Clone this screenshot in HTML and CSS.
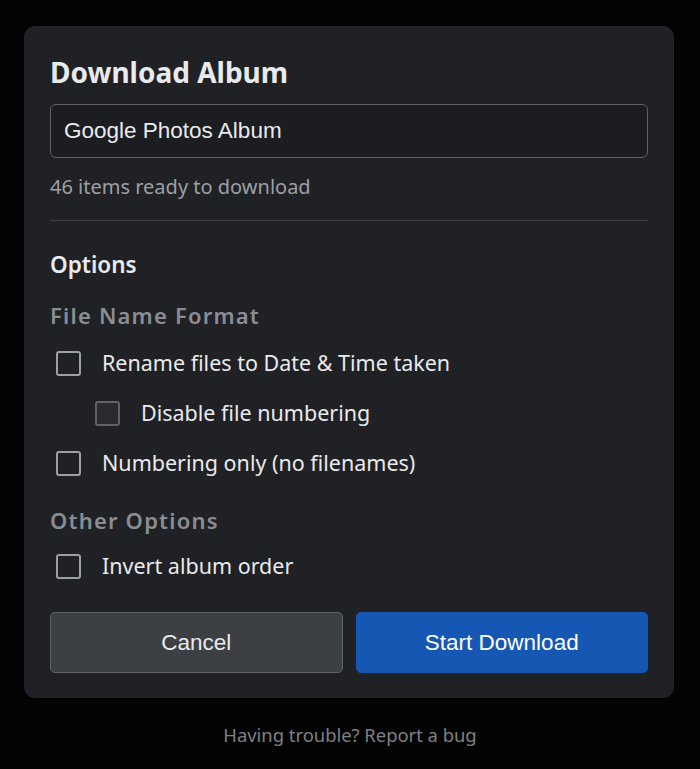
FILE: index.html
```html
<!DOCTYPE html>
<html lang="en">
<head>
<meta charset="utf-8">
<title>Download Album</title>
<link rel="stylesheet" href="styles.css">
</head>
<body>
<main class="card">
  <h1 class="title">Download Album</h1>
  <div class="name-input">Google Photos Album</div>
  <p class="count">46 items ready to download</p>
  <hr class="divider">
  <h2 class="options">Options</h2>
  <h3 class="group">File Name Format</h3>
  <label class="row"><span class="box"></span><span class="label">Rename files to Date &amp; Time taken</span></label>
  <label class="row sub"><span class="box disabled"></span><span class="label">Disable file numbering</span></label>
  <label class="row"><span class="box"></span><span class="label">Numbering only (no filenames)</span></label>
  <h3 class="group other">Other Options</h3>
  <label class="row"><span class="box"></span><span class="label">Invert album order</span></label>
  <div class="actions">
    <button class="btn cancel">Cancel</button>
    <button class="btn primary">Start Download</button>
  </div>
</main>
<p class="footer">Having trouble? Report a bug</p>
</body>
</html>
```
FILE: styles.css
```css
* { box-sizing: border-box; }
html, body { margin: 0; padding: 0; }
body {
  background: #030303;
  font-family: "Noto Sans", "Open Sans", sans-serif;
  color: #e8eaed;
  height: 769px;
  overflow: hidden;
}
.card {
  margin: 26px 26px 0 24px;
  width: 650px;
  background: #202124;
  border-radius: 11px;
  padding: 28px 26px 25px 26px;
}
.title {
  margin: 0 0 14px 0;
  font-size: 28px;
  line-height: 36px;
  font-weight: 700;
  color: #e8eaed;
}
.name-input {
  height: 54px;
  border: 1px solid #5f6368;
  border-radius: 6px;
  background: #1c1d20;
  padding: 0 13px;
  display: flex;
  align-items: center;
  font-family: "Liberation Sans", Arial, sans-serif;
  font-size: 22.5px;
  color: #e8eaed;
}
.count {
  margin: 17px 0 0 0;
  line-height: 24px;
  font-size: 20px;
  color: #9aa0a6;
}
.divider {
  margin: 21px 0 0 0;
  border: 0;
  height: 1px;
  background: #3c4043;
}
.options {
  margin: 29px 0 0 0;
  font-size: 22.5px;
  line-height: 30px;
  font-weight: 600;
  color: #e8eaed;
}
.group {
  margin: 20px 0 0 0;
  font-size: 22px;
  line-height: 30px;
  font-weight: 600;
  color: #8a8e94;
  letter-spacing: 1.2px;
}
.group.other { margin-top: 17px; }
.row {
  display: flex;
  align-items: center;
  height: 50px;
  padding-left: 6px;
  gap: 21px;
}
.group + .row { margin-top: 8px; }
.group.other + .row { margin-top: 6px; }
.row.sub { padding-left: 45px; }
.box {
  width: 25px;
  height: 25px;
  border: 2px solid #9aa0a6;
  border-radius: 3px;
  flex: none;
}
.box.disabled {
  border-color: #5f6368;
  background: #2a2b2e;
}
.label {
  font-size: 21.5px;
  line-height: 30px;
  color: #e8eaed;
}
.actions {
  display: grid;
  grid-template-columns: 1fr 1fr;
  gap: 13px;
  margin-top: 21px;
}
.btn {
  height: 61px;
  border-radius: 5px;
  font-family: "Liberation Sans", Arial, sans-serif;
  font-size: 22.5px;
  color: #e8eaed;
  cursor: pointer;
}
.btn.cancel {
  background: #3c4043;
  border: 1px solid #5f6368;
}
.btn.primary {
  background: #1557b3;
  border: 1px solid #1557b3;
  color: #fff;
}
.footer {
  margin: 25px 0 0 0;
  text-align: center;
  font-size: 18.4px;
  line-height: 24px;
  color: #7e8084;
}
```
